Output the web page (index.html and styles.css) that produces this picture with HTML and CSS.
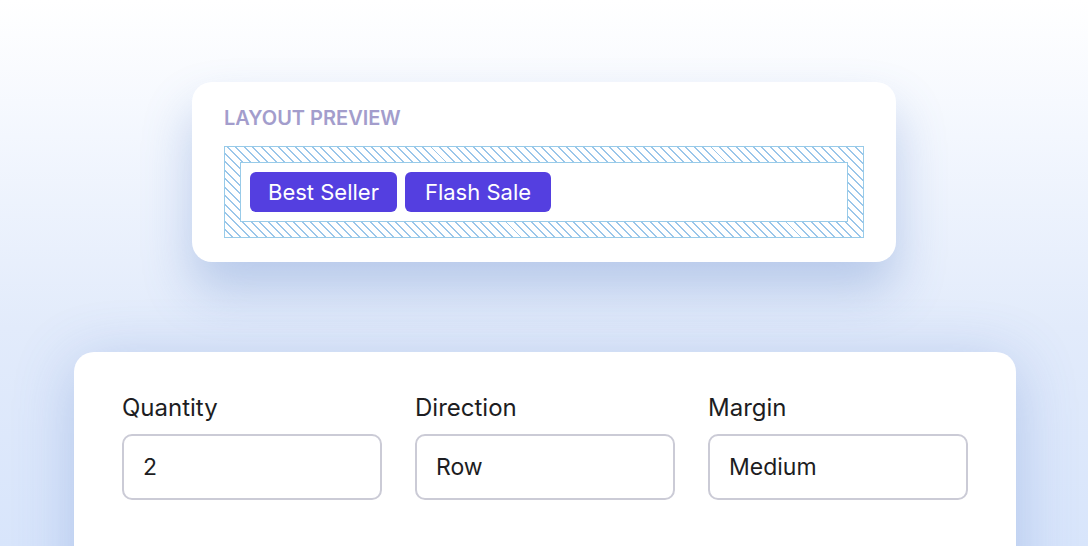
FILE: index.html
```html
<!DOCTYPE html>
<html>
<head>
<meta charset="utf-8">
<link rel="stylesheet" href="styles.css">
</head>
<body>
<main class="stage">
  <section class="preview-card">
    <div class="preview-label">LAYOUT PREVIEW</div>
    <div class="hatch">
      <div class="inner">
        <span class="chip">Best Seller</span>
        <span class="chip">Flash Sale</span>
      </div>
    </div>
  </section>
  <section class="controls-card">
    <div class="field">
      <label class="field-label">Quantity</label>
      <div class="input">2</div>
    </div>
    <div class="field">
      <label class="field-label">Direction</label>
      <div class="input">Row</div>
    </div>
    <div class="field">
      <label class="field-label">Margin</label>
      <div class="input">Medium</div>
    </div>
  </section>
</main>
</body>
</html>
```
FILE: styles.css
```css
html, body {
  margin: 0;
  height: 100%;
}
body {
  font-family: Inter, "Noto Sans", sans-serif;
  background: linear-gradient(180deg, #ffffff 0%, #f3f7fe 25%, #e2ebfb 60%, #d8e5fb 100%);
  overflow: hidden;
}
.stage {
  display: flex;
  flex-direction: column;
  align-items: center;
  padding-top: 82px;
  gap: 90px;
}
.preview-card {
  width: 704px;
  box-sizing: border-box;
  padding: 24px 32px 24px;
  background: #ffffff;
  border-radius: 20px;
  box-shadow: 0 28px 50px rgba(80, 120, 195, 0.32);
}
.preview-label {
  font-size: 20px;
  font-weight: 600;
  color: #a39dcc;
  line-height: 24px;
  margin-bottom: 16px;
}
.hatch {
  border: 1px solid #98cbe9;
  padding: 15px;
  background: repeating-linear-gradient(45deg, #ffffff 0px, #ffffff 4.6px, #9ac6ea 4.6px, #9ac6ea 6px);
}
.inner {
  background: #ffffff;
  border: 1px solid #98cbe9;
  padding: 9px;
  display: flex;
  gap: 8px;
}
.chip {
  height: 40px;
  display: flex;
  align-items: center;
  padding: 0 18px;
  background: #543fe0;
  color: #ffffff;
  font-size: 22px;
  border-radius: 6px;
}
.chip + .chip {
  padding: 0 20px;
}
.controls-card {
  width: 942px;
  height: 260px;
  margin-left: 2px;
  box-sizing: border-box;
  padding: 41px 48px;
  background: #ffffff;
  border-radius: 20px;
  box-shadow: 0 10px 60px rgba(80, 120, 200, 0.3);
  display: grid;
  grid-template-columns: repeat(3, 260px);
  column-gap: 33px;
  align-content: start;
}
.field {
  display: flex;
  flex-direction: column;
  gap: 11px;
}
.field-label {
  font-size: 24px;
  line-height: 30px;
  color: #1d1d22;
}
.input {
  height: 66px;
  box-sizing: border-box;
  border: 2px solid #cbcbd6;
  border-radius: 10px;
  padding: 0 19px;
  display: flex;
  align-items: center;
  font-size: 23px;
  color: #1d1d22;
}
```
